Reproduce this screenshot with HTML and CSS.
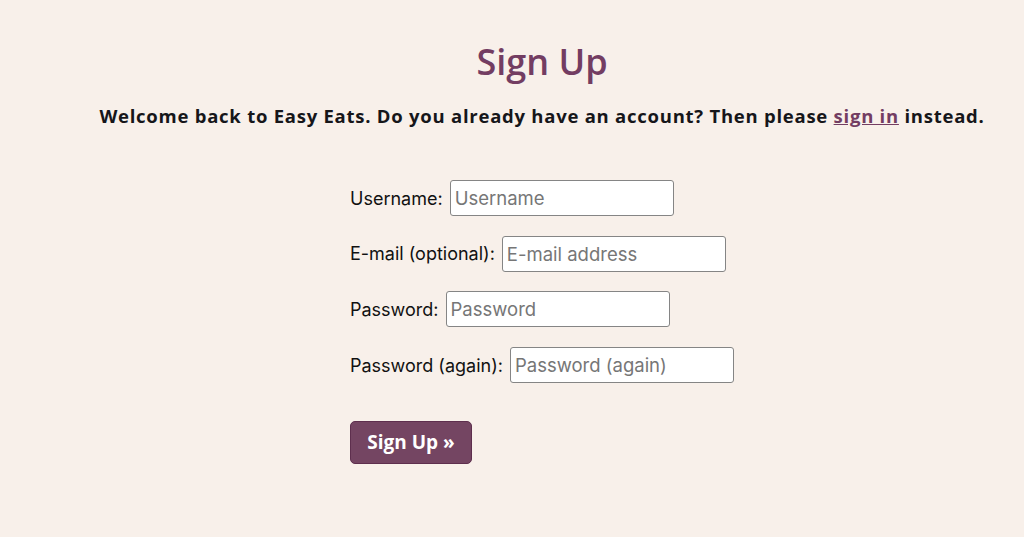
FILE: index.html
```html
<!DOCTYPE html>
<html lang="en">
<head>
<meta charset="utf-8">
<title>Sign Up</title>
<link rel="stylesheet" href="styles.css">
</head>
<body>
<main class="page">
  <h1 class="title">Sign Up</h1>
  <p class="intro">Welcome back to Easy Eats. Do you already have an account? Then please <a href="#" class="link">sign in</a> instead.</p>
  <form class="form">
    <div class="row"><label for="u">Username:</label> <input id="u" class="field" type="text" placeholder="Username"></div>
    <div class="row"><label for="e">E-mail (optional):</label> <input id="e" class="field" type="email" placeholder="E-mail address"></div>
    <div class="row"><label for="p1">Password:</label> <input id="p1" class="field" type="password" placeholder="Password"></div>
    <div class="row"><label for="p2">Password (again):</label> <input id="p2" class="field" type="password" placeholder="Password (again)"></div>
    <button class="btn" type="submit">Sign Up »</button>
  </form>
</main>
</body>
</html>
```
FILE: styles.css
```css
html, body {
  margin: 0;
  padding: 0;
  background: #f8f0ea;
}
.page {
  padding-left: 60px;
  padding-top: 38px;
  display: flex;
  flex-direction: column;
  align-items: center;
}
.title {
  margin: 0;
  font-family: "Open Sans", "Noto Sans", sans-serif;
  font-weight: 600;
  font-size: 36px;
  line-height: 48px;
  color: #733d62;
}
.intro {
  margin: 15px 0 0 0;
  font-family: "Open Sans", "Noto Sans", sans-serif;
  font-weight: 700;
  font-size: 18.5px;
  letter-spacing: 0.75px;
  line-height: 30px;
  color: #16161a;
  white-space: nowrap;
}
.link {
  color: #733d62;
}
.form {
  align-self: flex-start;
  margin: 49px 0 0 290px;
  display: flex;
  flex-direction: column;
  align-items: flex-start;
  gap: 19.7px;
  font-family: Inter, "Liberation Sans", Arial, sans-serif;
  font-size: 18px;
  color: #111;
}
.row {
  display: flex;
  align-items: center;
  gap: 7px;
  height: 36px;
}
.field {
  box-sizing: border-box;
  width: 224px;
  height: 36px;
  margin: 0;
  padding: 0 4px;
  border: 1px solid #858585;
  border-radius: 3px;
  background: #fff;
  font-family: Inter, "Liberation Sans", Arial, sans-serif;
  font-size: 18.5px;
  color: #111;
}
.field::placeholder {
  color: #767676;
}
.btn {
  margin-top: 18px;
  box-sizing: border-box;
  width: 122px;
  height: 43px;
  border: 1px solid #5e2f4e;
  border-radius: 5px;
  background: #744562;
  color: #fff;
  font-family: "Open Sans", "Noto Sans", sans-serif;
  font-weight: 700;
  font-size: 19px;
  padding: 0;
}
```
